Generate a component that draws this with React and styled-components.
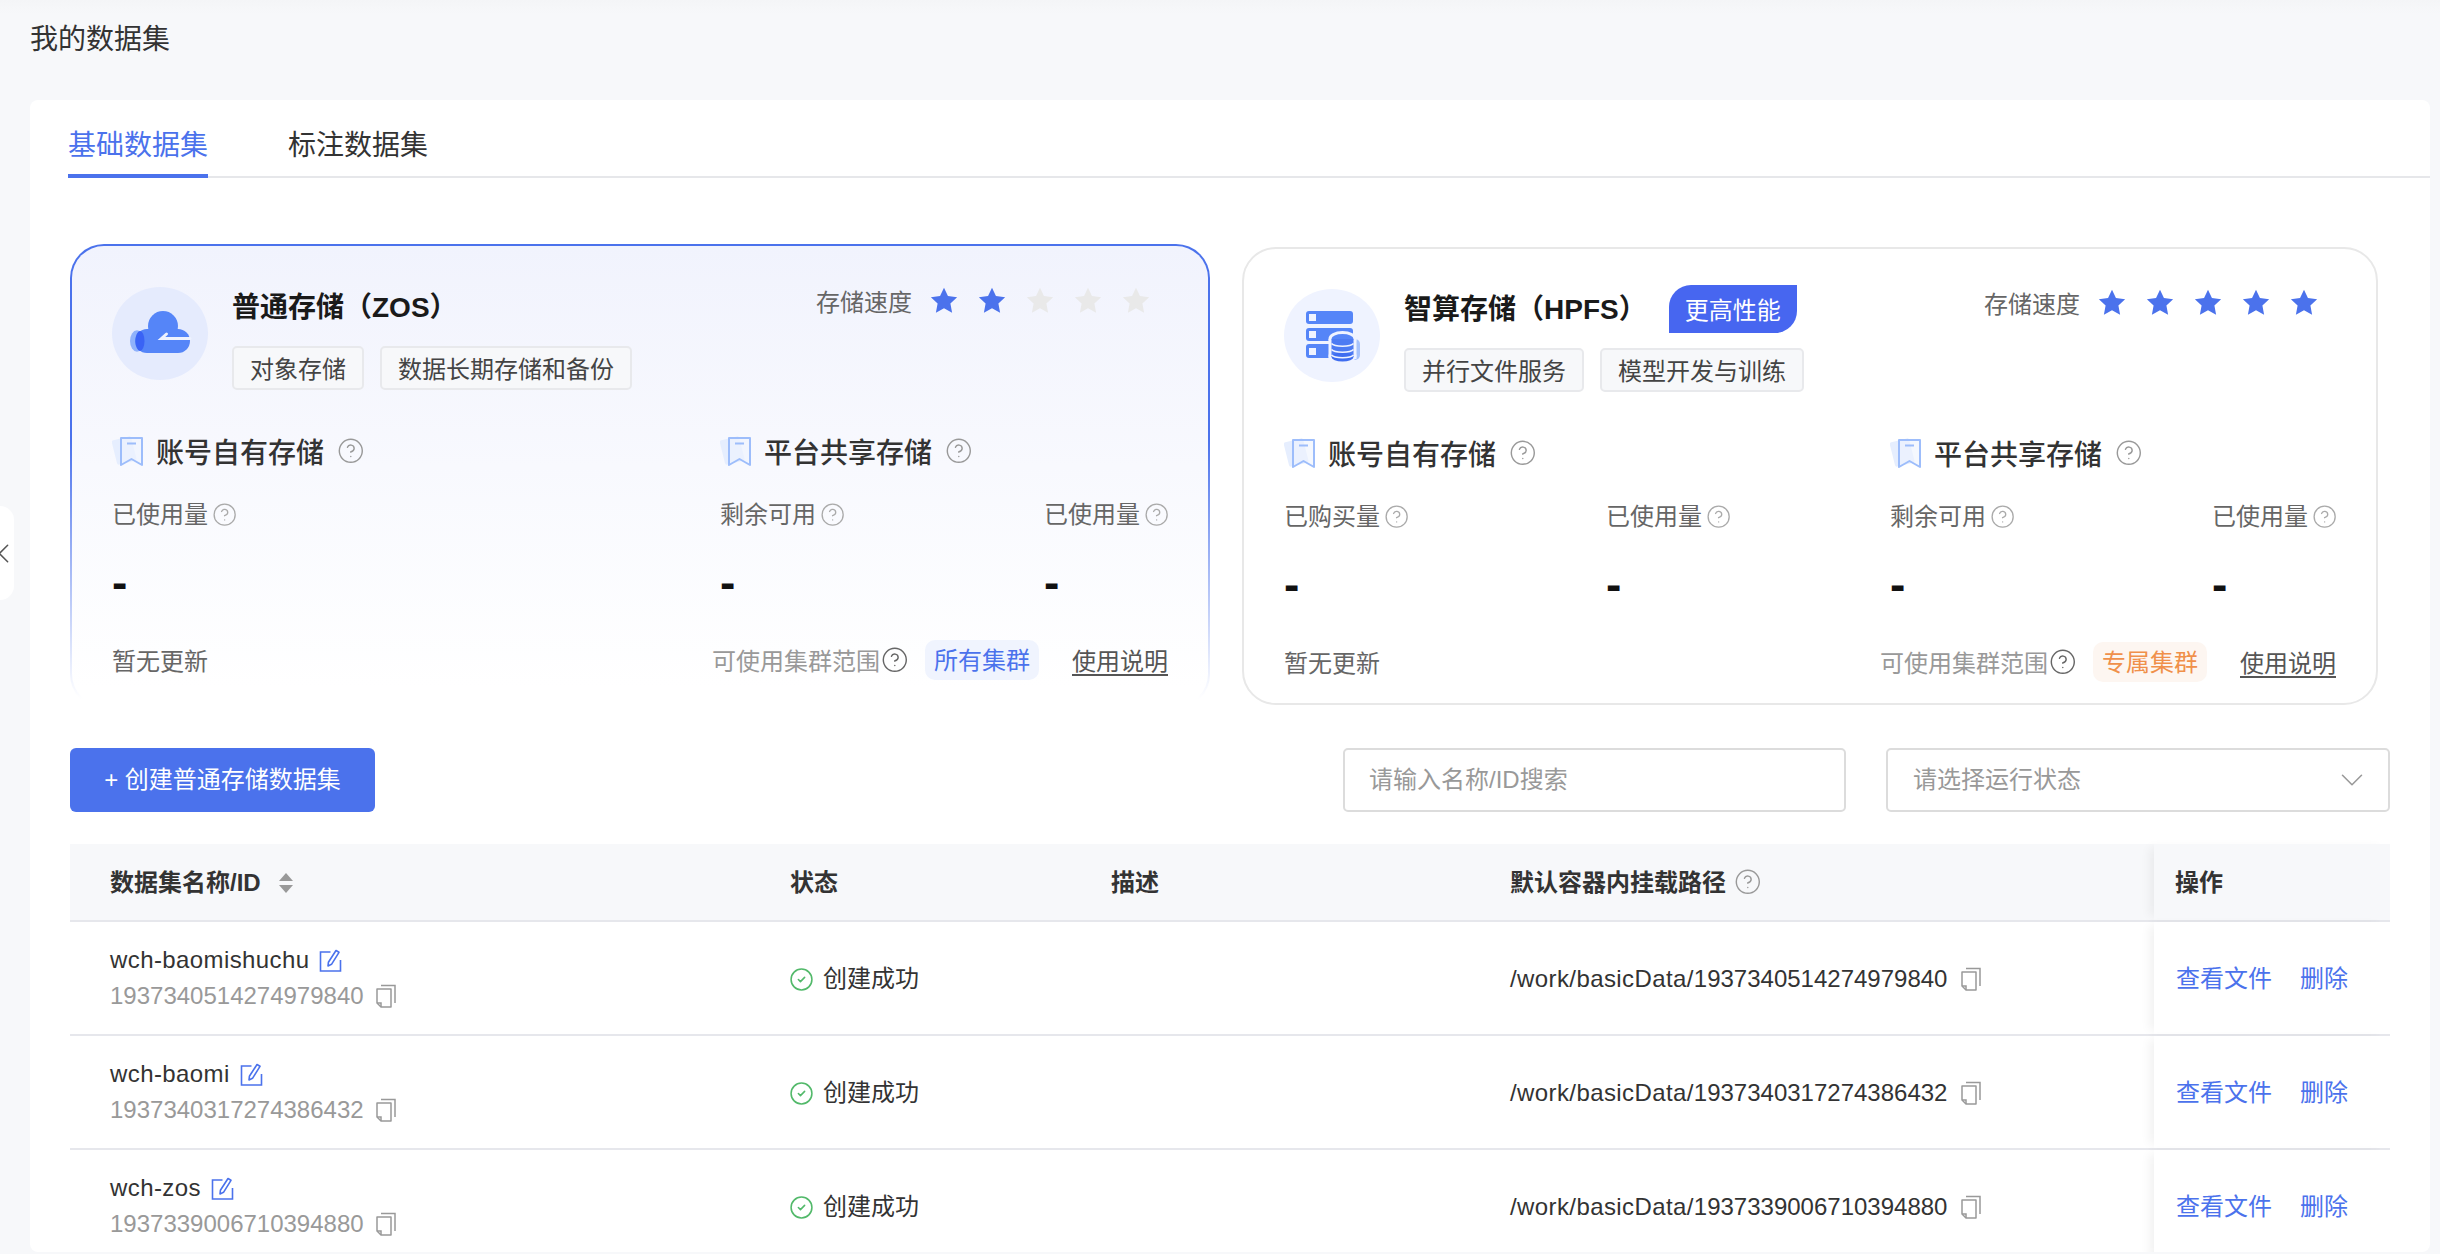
import React from 'react';
import styled, { createGlobalStyle } from 'styled-components';
import { CircleHelp, CircleCheck, ChevronLeft, ChevronDown } from 'lucide-react';

const BLUE = '#4b72ec';

const GlobalStyle = createGlobalStyle`
  html, body { margin: 0; padding: 0; }
  body {
    font-family: "Liberation Sans", "Noto Sans CJK SC", sans-serif;
    line-height: 32px;
    color: #333;
    background: #f7f8fa;
  }
  * { box-sizing: border-box; }
`;

const Page = styled.div`
  position: relative;
  width: 2440px;
  height: 1254px;
  overflow: hidden;
  background: linear-gradient(#f4f5f7, #f7f8fa 14px);
`;

const PageHead = styled.div`
  height: 100px;
  padding: 20px 0 0 30px;
`;

const PageTitle = styled.h1`
  margin: 0;
  font-size: 28px;
  line-height: 40px;
  font-weight: 400;
  color: #333;
`;

const CollapseTab = styled.div`
  position: absolute;
  left: 0;
  top: 506px;
  width: 14px;
  height: 94px;
  background: #fff;
  border-radius: 0 14px 14px 0;
  display: flex;
  align-items: center;
  color: #555;
  svg { flex: none; margin-left: -13px; }
`;

const Panel = styled.div`
  width: 2400px;
  height: 1152px;
  margin-left: 30px;
  background: #fff;
  border-radius: 8px;
  overflow: hidden;
`;

const TabBar = styled.div`
  display: flex;
  gap: 80px;
  height: 78px;
  margin-left: 38px;
  border-bottom: 2px solid #e6e7ea;
`;

const Tab = styled.div`
  height: 78px;
  margin-bottom: -2px;
  padding-top: 28px;
  font-size: 28px;
  line-height: 36px;
  color: ${(p) => (p.$active ? BLUE : '#333')};
  border-bottom: 4px solid ${(p) => (p.$active ? BLUE : 'transparent')};
`;

const Cards = styled.div`
  display: flex;
  align-items: center;
  gap: 32px;
  margin: 66px 0 0 40px;
  height: 464px;
`;

const Card = styled.section`
  width: ${(p) => (p.$active ? 1140 : 1136)}px;
  height: ${(p) => (p.$active ? 464 : 458)}px;
  padding: ${(p) => (p.$active ? 41 : 40)}px 40px 0;
  border-radius: 34px;
  border: 2px solid ${(p) => (p.$active ? 'transparent' : '#e8e8e8')};
  background: ${(p) =>
    p.$active
      ? `linear-gradient(#f1f3fd, #ffffff 96%) padding-box, linear-gradient(${BLUE} 42%, #ffffff 98%) border-box`
      : '#fff'};
`;

const CardHead = styled.div`
  display: flex;
  align-items: flex-start;
  height: 103px;
`;

const IconCircle = styled.div`
  flex: none;
  width: 96px;
  height: 93px;
  border-radius: 50%;
  background: ${(p) => (p.$active ? '#e5ebfd' : '#eff3ff')};
  svg { display: block; }
`;

const CardInfo = styled.div`
  margin-left: 24px;
`;

const TitleLine = styled.div`
  display: flex;
  align-items: flex-start;
  height: 38px;
`;

const CardTitle = styled.h2`
  margin: 0;
  font-size: 28px;
  line-height: 42px;
  font-weight: 700;
  color: #1a1a1a;
`;

const PerfBadge = styled.span`
  height: 48px;
  margin: -4px 0 0 22px;
  padding: 0 16px;
  font-size: 24px;
  line-height: 51px;
  color: #fff;
  background: #4766f0;
  border-radius: 22px 0 22px 0;
`;

const Tags = styled.div`
  display: flex;
  gap: 16px;
  margin-top: 21px;
`;

const Tag = styled.span`
  height: 44px;
  padding: 0 16px;
  font-size: 24px;
  line-height: 43px;
  color: #444;
  background: #f7f8fa;
  border: 2px solid #e8e9ec;
  border-radius: 5px;
`;

const Speed = styled.div`
  display: flex;
  align-items: center;
  margin-left: auto;
  margin-right: 16px;
  height: 32px;
`;

const SpeedLabel = styled.span`
  font-size: 24px;
  color: #666;
  margin-right: 16px;
`;

const StarBox = styled.svg`
  display: block;
  width: 32px;
  height: 32px;
  margin: -4px 16px 0 0;
  &:last-child { margin-right: 0; }
  fill: ${(p) => (p.$on ? BLUE : '#e9e9e9')};
`;

const Sections = styled.div`
  display: grid;
  grid-template-columns: ${(p) => p.$split}px 1fr;
  margin-top: 41px;
`;

const SectionHead = styled.div`
  display: flex;
  align-items: center;
  height: 40px;
  font-size: 28px;
  line-height: normal;
  font-weight: 500;
  color: #333;
`;

const SectionName = styled.span`
  margin: 0 15px 0 13px;
`;

const Stats = styled.div`
  display: flex;
  justify-content: ${(p) => (p.$spread ? 'space-between' : 'flex-start')};
  margin-top: 28px;
`;

const Stat = styled.div`
  flex: none;
  width: ${(p) => (p.$spread ? 'auto' : '322px')};
`;

const StatLabel = styled.div`
  display: flex;
  align-items: center;
  gap: 6px;
  height: 32px;
  font-size: 24px;
  color: #666;
`;

const StatValue = styled.div`
  margin-top: 31px;
  height: 40px;
  font-size: 46px;
  line-height: 40px;
  font-weight: 700;
  color: #111;
`;

const CardFoot = styled.div`
  display: flex;
  align-items: center;
  justify-content: space-between;
  height: 40px;
  margin-top: 38px;
`;

const UpdateText = styled.span`
  padding-top: 3px;
  font-size: 24px;
  color: #666;
`;

const FootRight = styled.div`
  display: flex;
  align-items: center;
`;

const ScopeText = styled.span`
  padding-top: 3px;
  font-size: 24px;
  color: #999;
  margin-right: 3px;
`;

const ClusterBadge = styled.span`
  height: 40px;
  margin: 0 33px 0 18px;
  padding: 0 9px;
  font-size: 24px;
  line-height: 41px;
  border-radius: 10px;
  color: ${(p) => (p.$tone === 'orange' ? '#f0904a' : BLUE)};
  background: ${(p) => (p.$tone === 'orange' ? '#fdf6f1' : '#f0f4fe')};
`;

const DocLink = styled.a`
  padding-top: 3px;
  font-size: 24px;
  color: #555;
  text-decoration: underline;
  text-underline-offset: 4px;
`;

const Toolbar = styled.div`
  display: flex;
  align-items: center;
  height: 64px;
  margin: 40px 40px 0;
`;

const CreateButton = styled.button`
  width: 305px;
  height: 64px;
  border: 0;
  border-radius: 6px;
  background: ${BLUE};
  color: #fff;
  font: inherit;
  font-size: 24px;
  padding: 0;
`;

const SearchBox = styled.div`
  width: 503px;
  height: 64px;
  margin-left: auto;
  padding-left: 24px;
  border: 2px solid #dcdcdc;
  border-radius: 5px;
  font-size: 24px;
  line-height: 60px;
  color: #999;
`;

const SelectBox = styled.div`
  display: flex;
  align-items: center;
  justify-content: space-between;
  width: 504px;
  height: 64px;
  margin-left: 40px;
  padding: 0 17px 0 25px;
  border: 2px solid #dcdcdc;
  border-radius: 5px;
  font-size: 24px;
  color: #999;
`;

const Table = styled.div`
  margin: 32px 40px 0;
`;

const Row = styled.div`
  display: grid;
  grid-template-columns: 680px 321px 399px 684px 236px;
  height: ${(p) => (p.$head ? 78 : 114)}px;
  background: ${(p) => (p.$head ? '#f7f8fa' : '#fff')};
  border-bottom: 2px solid #e6e7ec;
  font-size: 24px;
  font-weight: ${(p) => (p.$head ? 600 : 400)};
  color: #333;
`;

const Cell = styled.div`
  display: flex;
  align-items: center;
  padding: 2px 0 0 40px;
`;

const NameCell = styled.div`
  display: flex;
  flex-direction: column;
  justify-content: center;
  gap: 4px;
  padding-left: 40px;
`;

const NameLine = styled.div`
  display: flex;
  align-items: center;
  height: 32px;
  gap: 10px;
  letter-spacing: 0.4px;
  color: #333;
`;

const IdLine = styled.div`
  display: flex;
  align-items: center;
  height: 32px;
  gap: 12px;
  color: #999;
`;

const FixedCell = styled.div`
  display: flex;
  align-items: center;
  padding: 2px 0 0 ${(p) => (p.$head ? 21 : 22)}px;
  gap: 28px;
  background: ${(p) => (p.$head ? '#f7f8fa' : '#fff')};
  box-shadow: -8px 0 10px -4px rgba(0, 0, 0, 0.06);
`;

const StatusIcon = styled(CircleCheck)`
  margin: 0 9px 0 -1px;
  color: #52b96a;
`;

const PathText = styled.span`
  margin-right: 14px;
`;

const PathPrefix = styled.span`
  letter-spacing: 0.4px;
`;

const ActionLink = styled.a`
  color: ${BLUE};
`;

const SortIcon = styled.svg`
  margin-left: 17px;
  fill: #999;
`;

const HeadHelpBox = styled.span`
  display: flex;
  margin: -3px 0 0 10px;
`;

const HelpGlyph = styled(CircleHelp)`
  flex: none;
  margin: ${(p) => -p.$box * 0.075}px;
`;

const Star = ({ on }) => (
  <StarBox $on={on} viewBox="0 0 30 30">
    <path
      d="M15 2.5l3.7 7.9 8.6 1.1-6.3 5.9 1.6 8.6-7.6-4.2-7.6 4.2 1.6-8.6-6.3-5.9 8.6-1.1z"
      strokeLinejoin="round"
    />
  </StarBox>
);

const CloudIcon = () => (
  <svg width="96" height="93" viewBox="0 0 96 93">
    <ellipse cx="25" cy="54" rx="7" ry="10.7" fill="#8fb2fb" />
    <circle cx="51" cy="39" r="15" fill="#5585f8" />
    <rect x="23" y="42" width="55" height="24" rx="12" fill="#5585f8" />
    <ellipse cx="28" cy="54" rx="4.5" ry="10" fill="#3a63f5" />
    <path d="M54.5 47L49.5 51.5H78" fill="none" stroke="#eef2fe" strokeWidth="3" strokeLinecap="round" />
  </svg>
);

const ServerIcon = () => (
  <svg width="96" height="93" viewBox="0 0 96 93">
    <rect x="22" y="22" width="47" height="13" rx="3" fill="#5585f8" />
    <rect x="22" y="39" width="47" height="13" rx="3" fill="#5585f8" />
    <rect x="22" y="55" width="47" height="14" rx="3" fill="#5585f8" />
    <rect x="25" y="25" width="7" height="7" fill="#eff3ff" />
    <rect x="25" y="42" width="7" height="7" fill="#eff3ff" />
    <rect x="25" y="59" width="7" height="7" fill="#eff3ff" />
    <rect x="62" y="50" width="14" height="21" rx="5" fill="#a6c2fb" />
    <ellipse cx="58.5" cy="50" rx="14" ry="8" fill="#eff3ff" />
    <rect x="44.5" y="50" width="28" height="20" fill="#eff3ff" />
    <ellipse cx="58.5" cy="67" rx="14" ry="7" fill="#eff3ff" />
    <ellipse cx="58.5" cy="50" rx="11" ry="5" fill="#5585f8" />
    <rect x="47.5" y="50" width="22" height="18" fill="#4d7bf3" />
    <ellipse cx="58.5" cy="68" rx="11" ry="4.5" fill="#3f6df0" />
    <path
      d="M47.5 54.5c3 3.6 19 3.6 22 0M47.5 60.5c3 3.6 19 3.6 22 0M47.5 66c3 3.6 19 3.6 22 0"
      fill="none"
      stroke="#eff3ff"
      strokeWidth="1.5"
    />
  </svg>
);

const BookmarkIcon = () => (
  <svg width="31" height="32" viewBox="0 0 31 32" style={{ flex: 'none' }}>
    <rect x="2" y="3" width="20" height="25" rx="2" fill="#e6eefe" transform="rotate(-14 12 15)" />
    <path
      d="M9 3h21v27l-10.5-6L9 30z"
      fill="#eef3fe"
      fillOpacity="0.6"
      stroke="#9dbdfb"
      strokeWidth="2"
      strokeLinejoin="round"
    />
    <path d="M15 8.500h9" stroke="#9dbdfb" strokeWidth="2" />
  </svg>
);

const EditIcon = () => (
  <svg width="23" height="23" viewBox="0 0 22 23" fill="none" stroke={BLUE} strokeWidth="1.600">
    <path d="M11 3H1v19h20V11" />
    <path d="M16.500 1.500l3 1.800-7.500 12-3.500 1.700.4-3.700z" strokeLinejoin="round" />
  </svg>
);

const CopyIcon = () => (
  <svg width="20" height="24" viewBox="0 0 20 24" fill="none" stroke="#999" strokeWidth="1.500">
    <path d="M1 5h14v18H5l-4-4z" strokeLinejoin="round" />
    <path d="M1 19h4v4" />
    <path d="M5 1.500h14V19" />
  </svg>
);

// lucide draws its circle smaller than the box, so box is the size the circle should come out
const Help = ({ box = 22, color = '#aaa' }) => (
  <HelpGlyph $box={box} size={box * 1.15} color={color} strokeWidth={1.25} />
);

const cards = [
  {
    key: 'zos',
    active: true,
    title: '普通存储（ZOS）',
    tags: ['对象存储', '数据长期存储和备份'],
    stars: 2,
    split: 608,
    own: ['已使用量'],
    tone: 'blue',
    cluster: '所有集群',
  },
  {
    key: 'hpfs',
    title: '智算存储（HPFS）',
    badge: '更高性能',
    tags: ['并行文件服务', '模型开发与训练'],
    stars: 5,
    split: 606,
    own: ['已购买量', '已使用量'],
    tone: 'orange',
    cluster: '专属集群',
  },
];

const rows = [
  { name: 'wch-baomishuchu', id: '1937340514274979840' },
  { name: 'wch-baomi', id: '1937340317274386432' },
  { name: 'wch-zos', id: '1937339006710394880' },
];

const StatBlock = ({ label, spread }) => (
  <Stat $spread={spread}>
    <StatLabel>
      {label}
      <Help />
    </StatLabel>
    <StatValue>-</StatValue>
  </Stat>
);

const StorageCard = ({ card }) => (
  <Card $active={card.active}>
    <CardHead>
      <IconCircle $active={card.active}>{card.active ? <CloudIcon /> : <ServerIcon />}</IconCircle>
      <CardInfo>
        <TitleLine>
          <CardTitle>{card.title}</CardTitle>
          {card.badge && <PerfBadge>{card.badge}</PerfBadge>}
        </TitleLine>
        <Tags>
          {card.tags.map((t) => (
            <Tag key={t}>{t}</Tag>
          ))}
        </Tags>
      </CardInfo>
      <Speed>
        <SpeedLabel>存储速度</SpeedLabel>
        {[1, 2, 3, 4, 5].map((n) => (
          <Star key={n} on={n <= card.stars} />
        ))}
      </Speed>
    </CardHead>
    <Sections $split={card.split}>
      <div>
        <SectionHead>
          <BookmarkIcon />
          <SectionName>账号自有存储</SectionName>
          <Help box={24} color="#999" />
        </SectionHead>
        <Stats>
          {card.own.map((l) => (
            <StatBlock key={l} label={l} />
          ))}
        </Stats>
      </div>
      <div>
        <SectionHead>
          <BookmarkIcon />
          <SectionName>平台共享存储</SectionName>
          <Help box={24} color="#999" />
        </SectionHead>
        <Stats $spread>
          <StatBlock label="剩余可用" spread />
          <StatBlock label="已使用量" spread />
        </Stats>
      </div>
    </Sections>
    <CardFoot>
      <UpdateText>暂无更新</UpdateText>
      <FootRight>
        <ScopeText>可使用集群范围</ScopeText>
        <Help box={24} color="#666" />
        <ClusterBadge $tone={card.tone}>{card.cluster}</ClusterBadge>
        <DocLink>使用说明</DocLink>
      </FootRight>
    </CardFoot>
  </Card>
);

const App = () => (
  <Page>
    <GlobalStyle />
    <CollapseTab>
      <ChevronLeft size={33} strokeWidth={1.1} />
    </CollapseTab>
    <PageHead>
      <PageTitle>我的数据集</PageTitle>
    </PageHead>
    <Panel>
      <TabBar>
        <Tab $active>基础数据集</Tab>
        <Tab>标注数据集</Tab>
      </TabBar>
      <Cards>
        {cards.map((c) => (
          <StorageCard key={c.key} card={c} />
        ))}
      </Cards>
      <Toolbar>
        <CreateButton>+ 创建普通存储数据集</CreateButton>
        <SearchBox>请输入名称/ID搜索</SearchBox>
        <SelectBox>
          请选择运行状态
          <ChevronDown size={38} strokeWidth={1} color="#999" />
        </SelectBox>
      </Toolbar>
      <Table>
        <Row $head>
          <Cell>
            数据集名称/ID
            <SortIcon width="16" height="20" viewBox="0 0 16 20">
              <path d="M8 0l7 8H1zM8 20l7-8H1z" />
            </SortIcon>
          </Cell>
          <Cell>状态</Cell>
          <Cell>描述</Cell>
          <Cell>
            默认容器内挂载路径
            <HeadHelpBox>
              <Help box={24} color="#999" />
            </HeadHelpBox>
          </Cell>
          <FixedCell $head>操作</FixedCell>
        </Row>
        {rows.map((r) => (
          <Row key={r.id}>
            <NameCell>
              <NameLine>
                {r.name}
                <EditIcon />
              </NameLine>
              <IdLine>
                {r.id}
                <CopyIcon />
              </IdLine>
            </NameCell>
            <Cell>
              <StatusIcon size={25} strokeWidth={1.5} />
              创建成功
            </Cell>
            <Cell />
            <Cell>
              <PathText>
                <PathPrefix>/work/basicData/</PathPrefix>
                {r.id}
              </PathText>
              <CopyIcon />
            </Cell>
            <FixedCell>
              <ActionLink>查看文件</ActionLink>
              <ActionLink>删除</ActionLink>
            </FixedCell>
          </Row>
        ))}
      </Table>
    </Panel>
  </Page>
);

export default App;
